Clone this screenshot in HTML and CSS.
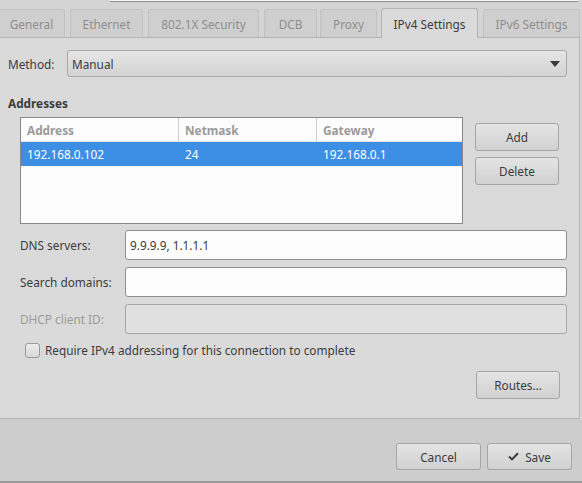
FILE: index.html
```html
<!DOCTYPE html>
<html>
<head>
<meta charset="utf-8">
<link rel="stylesheet" href="styles.css">
</head>
<body>
<div class="window">
  <div class="topstrip"><div class="prev-entry"></div></div>
  <div class="tabs">
    <div class="tab t-general">General</div>
    <div class="tab t-eth">Ethernet</div>
    <div class="tab t-sec">802.1X Security</div>
    <div class="tab t-dcb">DCB</div>
    <div class="tab t-proxy">Proxy</div>
    <div class="tab active t-v4">IPv4 Settings</div>
    <div class="tab t-v6">IPv6 Settings</div>
  </div>
  <div class="panel">
    <div class="method-row">
      <span class="label">Method:</span>
      <div class="combo">
        <span>Manual</span>
        <svg class="arrow" width="10" height="6" viewBox="0 0 10 6"><path d="M0 0 H10 L5 6 Z" fill="#3a3a3a"/></svg>
      </div>
    </div>
    <div class="section-title">Addresses</div>
    <div class="addr-row">
      <div class="table">
        <div class="thead">
          <div class="c1">Address</div>
          <div class="c2">Netmask</div>
          <div class="c3">Gateway</div>
        </div>
        <div class="trow selected">
          <div class="c1">192.168.0.102</div>
          <div class="c2">24</div>
          <div class="c3">192.168.0.1</div>
        </div>
      </div>
      <div class="side-buttons">
        <button class="btn">Add</button>
        <button class="btn">Delete</button>
      </div>
    </div>
    <div class="form">
      <span class="label">DNS servers:</span>
      <div class="entry">9.9.9.9, 1.1.1.1</div>
      <span class="label">Search domains:</span>
      <div class="entry"></div>
      <span class="label disabled">DHCP client ID:</span>
      <div class="entry disabled"></div>
    </div>
    <div class="check-row">
      <span class="checkbox"></span>
      <span>Require IPv4 addressing for this connection to complete</span>
    </div>
    <div class="routes-row">
      <button class="btn">Routes…</button>
    </div>
  </div>
  <div class="footer">
    <button class="btn fbtn">Cancel</button>
    <button class="btn fbtn"><svg width="11" height="9" viewBox="0 0 11 9"><path d="M1 4.6 L4 7.4 L10 1.2" fill="none" stroke="#3a3a3a" stroke-width="2"/></svg>Save</button>
  </div>
</div>
</body>
</html>
```

FILE: styles.css
```css
* { box-sizing: border-box; }
html, body {
  margin: 0;
  padding: 0;
  background: #cfcfcf;
}
body {
  width: 582px;
  height: 483px;
  overflow: hidden;
  font-family: "Noto Sans", "Open Sans", sans-serif;
  font-size: 11.8px;
  color: #3c3c3c;
}
.window {
  width: 582px;
  height: 483px;
  display: flex;
  flex-direction: column;
  background: #d4d4d4;
}
.topstrip {
  height: 7px;
  position: relative;
  padding-left: 110px;
  padding-right: 4px;
}
.prev-entry {
  height: 2px;
  background: #fafafa;
  border-bottom: 1px solid #8c8c8c;
}
.tabs {
  display: flex;
  align-items: flex-end;
  height: 30px;
  padding-left: 0;
  position: relative;
  z-index: 2;
}
.tab {
  height: 28px;
  margin-right: 5px;
  background: #cfcfcf;
  border: 1px solid #c2c2c2;
  border-bottom: none;
  border-radius: 3px 3px 0 0;
  color: #8e8e8e;
  display: flex;
  align-items: center;
  justify-content: center;
}
.t-general { width: 66px; margin-left: -1px; border-left: none; }
.t-eth { width: 73px; }
.t-sec { width: 111px; }
.t-dcb { width: 53px; margin-right: 3px; }
.t-proxy { width: 57px; margin-right: 4px; }
.t-v4 { width: 97px; }
.t-v6 { width: 97px; margin-right: 0; }
.tab.active {
  height: 30px;
  background: #dadada;
  border-color: #b4b4b4;
  color: #3c3c3c;
  margin-bottom: -1px;
}
.panel {
  height: 382px;
  width: 580px;
  background: #dadada;
  border-top: 1px solid #b4b4b4;
  border-right: 1px solid #b4b4b4;
  border-bottom: 1px solid #b4b4b4;
  padding: 12px 0 0 8px;
}
.method-row {
  display: flex;
  align-items: center;
  height: 27px;
}
.method-row .label { width: 59px; }
.combo {
  width: 500px;
  height: 27px;
  border: 1px solid #a9a9a9;
  border-radius: 3px;
  background: linear-gradient(#e6e6e6, #d3d3d3);
  display: flex;
  align-items: center;
  justify-content: space-between;
  padding: 0 6px 0 4px;
}
.section-title {
  font-weight: bold;
  margin-top: 17px;
  height: 18px;
  line-height: 18px;
}
.addr-row {
  display: flex;
  margin-top: 5px;
  padding-left: 12px;
}
.table {
  width: 443px;
  height: 107px;
  background: #fcfcfc;
  border: 1px solid #888;
}
.thead, .trow {
  display: flex;
  align-items: center;
}
.thead {
  height: 24px;
  color: #9a9a9a;
  font-weight: bold;
  border-bottom: 1px solid #e2e2e2;
}
.thead > div { height: 100%; display: flex; align-items: center; }
.thead .c1, .thead .c2 { border-right: 1px solid #d0d0d0; }
.c1 { width: 158px; padding-left: 6px; }
.c2 { width: 138px; padding-left: 6px; }
.c3 { flex: 1; padding-left: 6px; }
.trow { height: 24px; }
.trow.selected { background: #3d8ee5; color: #fff; }
.side-buttons {
  display: flex;
  flex-direction: column;
  gap: 6px;
  margin-left: 12px;
  margin-top: 6px;
}
.btn {
  font: inherit;
  color: #3c3c3c;
  width: 84px;
  height: 28px;
  border: 1px solid #a6a6a6;
  border-radius: 3px;
  background: linear-gradient(#e4e4e4, #d1d1d1);
  padding: 0;
  display: flex;
  align-items: center;
  justify-content: center;
  gap: 6px;
}
.form {
  display: grid;
  grid-template-columns: 105px 442px;
  row-gap: 7px;
  margin-top: 6px;
  padding-left: 12px;
  align-items: center;
}
.entry {
  height: 30px;
  border: 1px solid #8f8f8f;
  border-radius: 3px;
  background: #fcfcfc;
  display: flex;
  align-items: center;
  padding-left: 4px;
}
.entry.disabled { background: #e0e0e0; border-color: #a6a6a6; }
.label.disabled { color: #9a9a9a; }
.check-row {
  display: flex;
  align-items: center;
  margin-top: 8px;
  padding-left: 17px;
  gap: 5px;
}
.checkbox {
  width: 15px;
  height: 15px;
  border: 1px solid #9a9a9a;
  border-radius: 3px;
  background: linear-gradient(#ececec, #d8d8d8);
}
.routes-row {
  display: flex;
  justify-content: flex-end;
  padding-right: 19px;
  margin-top: 13px;
}
.footer {
  flex: 1;
  background: #cdcdcd;
  border-bottom: 2px solid #9a9a9a;
  display: flex;
  justify-content: flex-end;
  align-items: flex-start;
  gap: 6px;
  padding: 24px 10px 0 0;
}
.fbtn { width: 85px; height: 27px; }
```
